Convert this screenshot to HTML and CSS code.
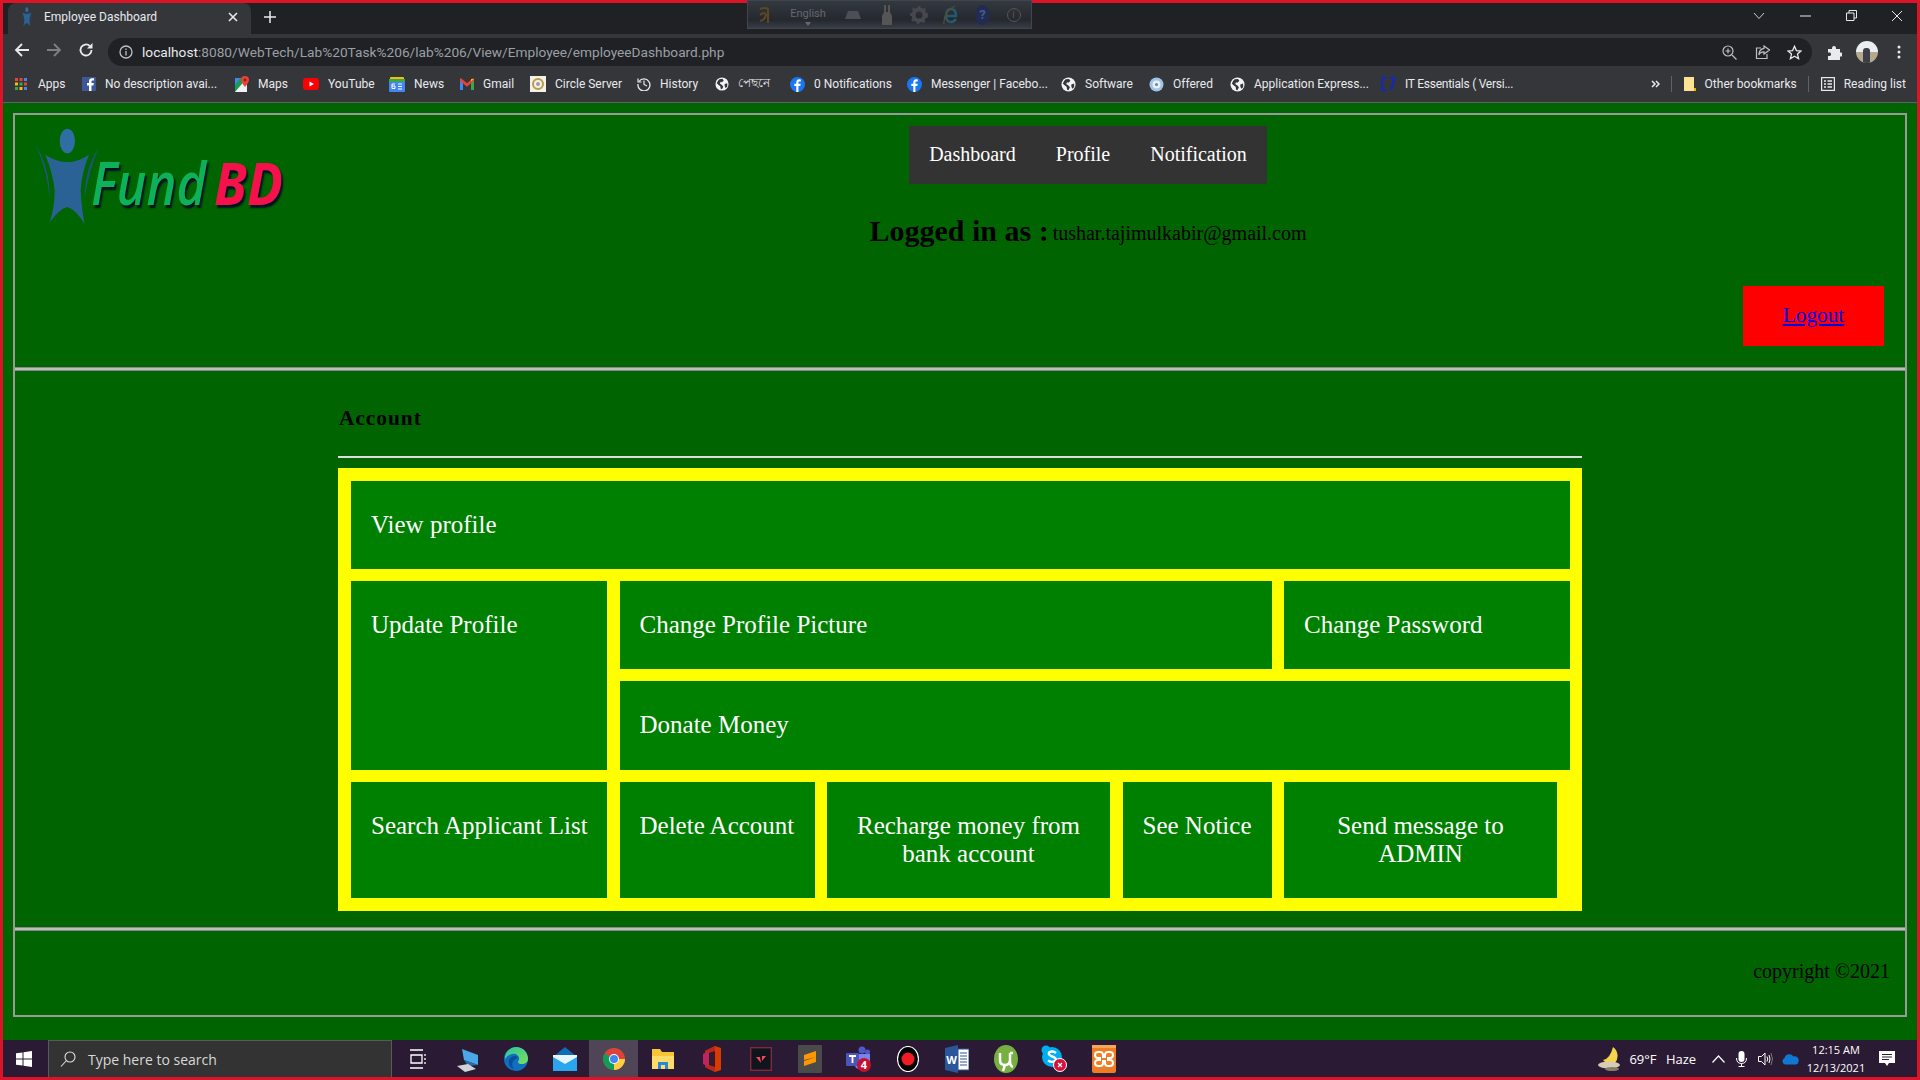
FILE: index.html
```html
<!DOCTYPE html>
<html lang="en">
<head>
<meta charset="utf-8">
<title>Employee Dashboard</title>
<link rel="stylesheet" href="styles.css">
</head>
<body>
<svg class="defs" xmlns="http://www.w3.org/2000/svg">
  <symbol id="figure" viewBox="100 50 210 300">
    <ellipse cx="203" cy="92" rx="23" ry="37" fill="#2f6ea3"/>
    <path d="M137 133 Q170 155 203 155 Q236 155 268 133 Q245 190 243 240 Q245 295 255 340 Q225 295 203 290 Q180 295 150 336 Q165 290 165 240 Q160 190 137 133Z" fill="#2a6296"/>
    <path d="M108 105 Q150 170 150 262 Q140 170 108 105Z" fill="#1f5585"/>
    <path d="M297 112 Q255 175 255 265 Q268 175 297 112Z" fill="#1f5585"/>
  </symbol>
  <symbol id="globe" viewBox="0 0 16 16">
    <circle cx="8" cy="8" r="7.5" fill="#f1f3f4"/>
    <path d="M5 2.5 L8.5 2 L10 4 L8 6 L6.5 5.5 L5.5 7.5 L8 9 L9.5 11 L8 14 L6.5 13.5 L6 10.5 L3.5 8.5 L2 7 Q3 4 5 2.5Z M11 8 L14 7 L14 11 L12 12.5 L11 10Z" fill="#35363a"/>
  </symbol>
  <symbol id="fbround" viewBox="0 0 16 16">
    <circle cx="8" cy="8" r="8" fill="#1877f2"/>
    <path d="M9 16V9.6h2l.4-2.3H9V5.9c0-.7.3-1.2 1.3-1.2h1.2V2.7c-.5-.1-1.2-.2-1.9-.2C8 2.500 6.700 3.700 6.700 5.600v1.700H4.600v2.300h2.100V16Z" fill="#fff"/>
  </symbol>
</svg>

<div class="window">
  <div class="langbar">
    <svg class="lb-i" width="14" height="20" viewBox="0 0 14 20"><path d="M2 4 Q8 2 10 4 L10 18 M2 10 Q7 6 8 10 Q7 15 2 16" fill="none" stroke="#5a4820" stroke-width="2"/></svg>
    <span class="lb-text">English<span class="lb-arrow"></span></span>
    <svg class="lb-i2" width="16" height="10" viewBox="0 0 16 10"><path d="M3 1H13L16 9H0Z" fill="#4c5056"/></svg>
    <svg class="lb-i3" width="12" height="22" viewBox="0 0 12 22"><path d="M3 1V8L1 12V21H11V12L9 8V1H7V8H5V1Z" fill="#555"/></svg>
    <svg class="lb-i4" width="18" height="18" viewBox="0 0 18 18"><circle cx="9" cy="9" r="5.500" fill="none" stroke="#45484e" stroke-width="4"/><circle cx="9" cy="9" r="8" fill="none" stroke="#45484e" stroke-width="2" stroke-dasharray="3 3"/></svg>
    <svg class="lb-i5" width="16" height="22" viewBox="0 0 16 22"><path d="M3 12H13Q13 5 8 5Q3 5 3 12Q3 18 8 18Q11 18 13 15" fill="none" stroke="#235a70" stroke-width="2.500"/><path d="M1 20Q0 8 12 2" fill="none" stroke="#5a4c20" stroke-width="1.300"/></svg>
    <span class="lb-q">?</span>
    <span class="lb-info">i</span>
  </div>

  <div class="tabstrip">
    <div class="tab">
      <svg class="tab-icon" width="14" height="20"><use href="#figure"/></svg>
      <span class="tab-title">Employee Dashboard</span>
      <svg class="tab-close" width="10" height="10" viewBox="0 0 10 10"><path d="M1 1L9 9M9 1L1 9" stroke="#e8eaed" stroke-width="1.600"/></svg>
    </div>
    <svg class="newtab" width="12" height="12" viewBox="0 0 12 12"><path d="M6 0V12M0 6H12" stroke="#e8eaed" stroke-width="1.500"/></svg>
    <div class="winctl">
      <svg width="12" height="8" viewBox="0 0 12 8"><path d="M1 1L6 6.500L11 1" fill="none" stroke="#c9cbce" stroke-width="1"/></svg>
      <svg width="11" height="2" viewBox="0 0 11 2"><path d="M0 1H11" stroke="#e8eaed" stroke-width="1"/></svg>
      <svg width="11" height="11" viewBox="0 0 11 11"><path d="M.5 3H8V10.500H.5ZM3 3V.5H10.500V8H8" fill="none" stroke="#e8eaed"/></svg>
      <svg width="12" height="12" viewBox="0 0 12 12"><path d="M1 1L11 11M11 1L1 11" stroke="#e8eaed" stroke-width="1"/></svg>
    </div>
  </div>

  <div class="toolbar">
    <svg class="nav-ic" width="16" height="16" viewBox="0 0 16 16"><path d="M15 8H2M8 2L2 8L8 14" fill="none" stroke="#e8eaed" stroke-width="1.800"/></svg>
    <svg class="nav-ic" width="16" height="16" viewBox="0 0 16 16"><path d="M1 8H14M8 2L14 8L8 14" fill="none" stroke="#7c7f84" stroke-width="1.800"/></svg>
    <svg class="nav-ic" width="16" height="16" viewBox="0 0 16 16"><path d="M13.500 8A5.500 5.500 0 1 1 11.800 4" fill="none" stroke="#e8eaed" stroke-width="1.800"/><path d="M14.500 1V6.500H9Z" fill="#e8eaed"/></svg>
    <div class="omnibox">
      <svg class="info" width="14" height="14" viewBox="0 0 14 14"><circle cx="7" cy="7" r="6" fill="none" stroke="#bdc1c6" stroke-width="1.300"/><path d="M7 6V10.500M7 3.500V5" stroke="#bdc1c6" stroke-width="1.300"/></svg>
      <span class="url"><span class="host">localhost</span>:8080/WebTech/Lab%20Task%206/lab%206/View/Employee/employeeDashboard.php</span>
      <div class="omni-right">
        <svg width="15" height="15" viewBox="0 0 15 15"><circle cx="6" cy="6" r="5" fill="none" stroke="#bdc1c6" stroke-width="1.200"/><path d="M10 10L14.500 14.500M6 3.500V8.500M3.500 6H8.500" stroke="#bdc1c6" stroke-width="1.200"/></svg>
        <svg width="15" height="15" viewBox="0 0 15 15"><path d="M6 3H1.500V13.500H12V9" fill="none" stroke="#bdc1c6" stroke-width="1.200"/><path d="M9 1L14.500 5L9 9V6.800Q5 6.800 3.800 10Q4 4.200 9 3.300Z" fill="none" stroke="#bdc1c6" stroke-width="1.200"/></svg>
        <svg width="15" height="15" viewBox="0 0 15 15"><path d="M7.500 1.300L9.400 5.600L14 6L10.500 9.100L11.600 13.700L7.500 11.300L3.400 13.700L4.500 9.100L1 6L5.600 5.600Z" fill="none" stroke="#e8eaed" stroke-width="1.300"/></svg>
      </div>
    </div>
    <div class="tool-right">
      <svg width="15" height="15" viewBox="0 0 15 15"><path d="M1 4H5V3A2 2 0 0 1 9 3V4H13V7.500H14A2 2 0 0 1 14 11.500H13V15H1V11H3A2 2 0 0 0 3 7.500H1Z" fill="#e8eaed"/></svg>
      <span class="avatar"><span class="avatar-man"></span></span>
      <svg width="4" height="14" viewBox="0 0 4 14"><circle cx="2" cy="2" r="1.500" fill="#e8eaed"/><circle cx="2" cy="7" r="1.500" fill="#e8eaed"/><circle cx="2" cy="12" r="1.500" fill="#e8eaed"/></svg>
    </div>
  </div>

  <div class="bookmarks">
    <div class="bm-list">
      <div class="bm"><svg width="12" height="12" viewBox="0 0 12 12"><g><rect width="3" height="3" fill="#ea4335"/><rect x="4.500" width="3" height="3" fill="#ea4335"/><rect x="9" width="3" height="3" fill="#4285f4"/><rect y="4.500" width="3" height="3" fill="#fbbc04"/><rect x="4.500" y="4.500" width="3" height="3" fill="#34a853"/><rect x="9" y="4.500" width="3" height="3" fill="#ea4335"/><rect y="9" width="3" height="3" fill="#34a853"/><rect x="4.500" y="9" width="3" height="3" fill="#fbbc04"/><rect x="9" y="9" width="3" height="3" fill="#4285f4"/></g></svg><span class="bm-apps">Apps</span></div>
      <div class="bm"><svg width="14" height="14" viewBox="0 0 14 14"><rect width="14" height="14" fill="#3b5998"/><path d="M9.500 14V8.500H11.500L11.800 6H9.500V4.700C9.500 4 9.800 3.500 10.700 3.500H12V1.300H10C8 1.300 7 2.500 7 4.300V6H5V8.500H7V14Z" fill="#fff"/></svg><span>No description avai...</span></div>
      <div class="bm"><svg width="14" height="16" viewBox="0 0 14 16"><rect y="2" width="12" height="14" fill="#1a9b5b"/><path d="M0 16L12 2V16Z" fill="#f2f2f2"/><path d="M0 2H5L0 9Z" fill="#4285f4"/><path d="M10 0A4 4 0 0 1 14 4Q14 6 10 11Q6 6 6 4A4 4 0 0 1 10 0Z" fill="#ea4335"/><circle cx="10" cy="4" r="1.400" fill="#8c1d18"/></svg><span>Maps</span></div>
      <div class="bm"><svg width="16" height="12" viewBox="0 0 16 12"><rect width="16" height="12" rx="3" fill="#f00"/><path d="M6.500 3.500V8.500L11 6Z" fill="#fff"/></svg><span>YouTube</span></div>
      <div class="bm"><svg width="16" height="16" viewBox="0 0 16 16"><rect x="1" y="1" width="14" height="5" rx="1" fill="#fbbc04"/><rect x="0" y="3" width="16" height="13" rx="1" fill="#4285f4"/><rect x="0" y="3" width="16" height="3" fill="#34a853"/><path d="M3 10H6V12.500H3V8H6M9 8H13M9 10.500H13M9 13H13" fill="none" stroke="#fff"/></svg><span>News</span></div>
      <div class="bm"><svg width="14" height="12" viewBox="0 0 14 12"><path d="M0 1V12H3V5Z" fill="#4285f4"/><path d="M14 1V12H11V5Z" fill="#34a853"/><path d="M0 1L7 7L14 1" fill="none" stroke="#ea4335" stroke-width="2.500"/><path d="M14 1L11 3.500V1Z" fill="#fbbc04"/></svg><span>Gmail</span></div>
      <div class="bm"><svg width="16" height="16" viewBox="0 0 16 16"><rect width="16" height="16" fill="#f4f1e8"/><circle cx="8" cy="8" r="5" fill="none" stroke="#b99b4a" stroke-width="2"/><circle cx="8" cy="8" r="2" fill="#9aa0a6"/></svg><span>Circle Server</span></div>
      <div class="bm"><svg width="14" height="14" viewBox="0 0 14 14"><path d="M2 4.500A6 6 0 1 1 1 7" fill="none" stroke="#e8eaed" stroke-width="1.300"/><path d="M7 3.500V7.500L10 9M1 1.500V5H4.500" fill="none" stroke="#e8eaed" stroke-width="1.200"/></svg><span>History</span></div>
      <div class="bm"><svg width="14" height="14"><use href="#globe"/></svg><span class="bn">পেছনে</span></div>
      <div class="bm"><svg width="15" height="15"><use href="#fbround"/></svg><span>0 Notifications</span></div>
      <div class="bm"><svg width="15" height="15"><use href="#fbround"/></svg><span>Messenger | Facebo...</span></div>
      <div class="bm"><svg width="15" height="15"><use href="#globe"/></svg><span>Software</span></div>
      <div class="bm"><svg width="15" height="15" viewBox="0 0 15 15"><circle cx="7.500" cy="7.500" r="7" fill="#9fc4e4"/><circle cx="7.500" cy="7.500" r="4" fill="#e8f0f6"/><circle cx="7.500" cy="7.500" r="1.500" fill="#5a87b0"/></svg><span>Offered</span></div>
      <div class="bm"><svg width="15" height="15"><use href="#globe"/></svg><span>Application Express...</span></div>
      <div class="bm"><svg width="15" height="16" viewBox="0 0 15 16"><path d="M6 2H1V14H6M9 2H14L10 14" fill="none" stroke="#1428b8" stroke-width="2.200"/></svg><span class="bm-it">IT Essentials ( Versi...</span></div>
    </div>
    <div class="bm-right">
      <svg class="chev" width="9" height="8" viewBox="0 0 9 8"><path d="M1 1L4 4L1 7M5 1L8 4L5 7" fill="none" stroke="#e8eaed" stroke-width="1.500"/></svg>
      <span class="sep"></span>
      <div class="bm"><svg width="12" height="14" viewBox="0 0 12 14"><path d="M0 0H10L10 11H12V14H0Z" fill="#fde293"/><path d="M10 11H12V14H10Z" fill="#e8b600"/></svg><span>Other bookmarks</span></div>
      <span class="sep"></span>
      <div class="bm"><svg width="14" height="14" viewBox="0 0 14 14"><rect x=".6" y=".6" width="12.800" height="12.800" fill="none" stroke="#e8eaed" stroke-width="1.200"/><path d="M3 4H5M3 7H5M3 10H5M6.500 4H11M6.500 7H11M6.500 10H11" stroke="#e8eaed" stroke-width="1.300"/></svg><span>Reading list</span></div>
    </div>
  </div>

  <div class="page">
    <div class="frame">
      <header class="site-head">
        <div class="logo">
          <svg class="logo-fig" width="70" height="100"><use href="#figure"/></svg>
          <div class="logo-word"><span class="fund">Fund</span><span class="bd">BD</span></div>
        </div>
        <div class="head-main">
          <nav class="topnav">
            <a class="topnav-link">Dashboard</a>
            <a class="topnav-link">Profile</a>
            <a class="topnav-link">Notification</a>
          </nav>
          <p class="logged"><b class="logged-label">Logged in as :</b> <span class="logged-mail">tushar.tajimulkabir@gmail.com</span></p>
          <div class="logout"><a class="logout-link" href="#">Logout</a></div>
        </div>
      </header>
      <div class="divider"></div>
      <main class="content">
        <div class="account">
          <h4 class="account-title">Account</h4>
          <hr class="account-rule">
          <div class="menu-grid">
            <div class="cell c-view">View profile</div>
            <div class="cell c-update">Update Profile</div>
            <div class="cell c-pic">Change Profile Picture</div>
            <div class="cell c-pass">Change Password</div>
            <div class="cell c-donate">Donate Money</div>
            <div class="cell c-search">Search Applicant List</div>
            <div class="cell c-delete">Delete Account</div>
            <div class="cell c-recharge center">Recharge money from bank account</div>
            <div class="cell c-notice">See Notice</div>
            <div class="cell c-send center">Send message to ADMIN</div>
          </div>
        </div>
      </main>
      <div class="divider"></div>
      <footer class="site-foot">copyright ©2021</footer>
    </div>
  </div>

  <div class="taskbar">
    <div class="start"><svg width="16" height="16" viewBox="0 0 16 16"><path d="M0 2.300L6.500 1.400V7.500H0ZM7.500 1.300L16 0V7.500H7.500ZM0 8.500H6.500V14.600L0 13.700ZM7.500 8.500H16V16L7.500 14.700Z" fill="#fff"/></svg></div>
    <div class="search">
      <svg width="16" height="16" viewBox="0 0 16 16"><circle cx="10" cy="6" r="5" fill="none" stroke="#e0e0e0" stroke-width="1.100"/><path d="M6.500 9.500L1 15.500" stroke="#e0e0e0" stroke-width="1.100"/></svg>
      <span class="search-text">Type here to search</span>
    </div>
    <div class="task-icons">
      <div class="ti"><svg width="16" height="20" viewBox="0 0 16 20"><path d="M0 1H13M0 19H13M1 6H12V14H1Z M15 5V7M15 9V11M15 13V15" fill="none" stroke="#fff" stroke-width="1.300"/></svg></div>
      <div class="ti"><svg width="24" height="26" viewBox="0 0 24 26"><path d="M7 3L23 9V19L9 14Z" fill="#4aa8e8"/><path d="M9 14L23 19L13 20Z" fill="#2b6ea8"/><path d="M2 20L13 18L21 23L10 26Z" fill="#cfd4d8"/></svg></div>
      <div class="ti"><svg width="24" height="24" viewBox="0 0 24 24"><defs><linearGradient id="edgeg" x1="0" y1="0" x2="1" y2="1"><stop offset="0" stop-color="#2cc3a0"/><stop offset="1" stop-color="#7be05a"/></linearGradient></defs><circle cx="12" cy="12" r="12" fill="#0f70c0"/><path d="M1 9C3 2 9 0 12 0C19 0 24 5 24 12C24 15 21 17 18 17C14 17 13 15 15 13C16 9 12 6 8 7C5 8 3 9 1 12Z" fill="url(#edgeg)"/><path d="M12 12C8 13 7 18 10 22C6 21 4 17 5 13C7 9 11 8 14 10Z" fill="#0b4e9b"/></svg></div>
      <div class="ti"><svg width="24" height="24" viewBox="0 0 24 24"><path d="M0 10L12 0L24 10V24H0Z" fill="#0f6cbd"/><path d="M0 10H24V24H0Z" fill="#2aa5ee"/><path d="M0 10L12 17L24 10V8H0Z" fill="#e8f4fc"/></svg></div>
      <div class="ti active"><svg width="22" height="22" viewBox="0 0 22 22"><circle cx="11" cy="11" r="11" fill="#db4437"/><path d="M11 11L1.500 5.500A11 11 0 0 0 11 22Z" fill="#0f9d58"/><path d="M11 11H22A11 11 0 0 1 11 22Z" fill="#ffcd40"/><circle cx="11" cy="11" r="5" fill="#fff"/><circle cx="11" cy="11" r="4" fill="#4285f4"/></svg></div>
      <div class="ti"><svg width="22" height="22" viewBox="0 0 22 22"><path d="M0 1H8L10 4H22V21H0Z" fill="#f8c537"/><path d="M0 8H22V21H0Z" fill="#fcdc6a"/><path d="M6 21V14H16V21H13V17H9V21Z" fill="#2b88d8"/></svg></div>
      <div class="ti"><svg width="18" height="26" viewBox="0 0 18 26"><path d="M2 5L12 0L18 2V24L12 26L2 21Z" fill="#d83b01"/><path d="M2 5L12 0V26L2 21Z" fill="#b7281a"/><path d="M6 7L12 5V21L6 19Z" fill="#35192f"/><path d="M0 8L6 5V21L0 18Z" fill="#c0245e"/></svg></div>
      <div class="ti"><svg width="22" height="24" viewBox="0 0 22 24"><rect x=".7" y=".7" width="20.600" height="22.600" fill="#10141c" stroke="#7d2a3c" stroke-width="1.400"/><path d="M6 10L11 16L10 10ZM16 9L12 14L12 9Z" fill="#ff4655"/></svg></div>
      <div class="ti"><svg width="24" height="28" viewBox="0 0 24 28"><rect width="24" height="28" rx="1" fill="#4a4a4a"/><path d="M18 6L6 10V15L18 12ZM18 12V17L6 21V16" fill="#ff9800"/></svg></div>
      <div class="ti"><svg width="27" height="27" viewBox="0 0 27 27"><circle cx="17" cy="5" r="3.500" fill="#5059c9"/><circle cx="22.500" cy="7" r="2.500" fill="#5059c9"/><path d="M10 9H25V20Q25 24 20 24H15Q10 24 10 20Z" fill="#7b83eb"/><rect x="1" y="8" width="13" height="13" rx="1" fill="#4b53bc"/><path d="M4 11H11M7.500 11V18" stroke="#fff" stroke-width="1.800"/><circle cx="19" cy="20" r="7" fill="#c4102e"/><text class="badge-num" x="19" y="24">4</text></svg></div>
      <div class="ti"><svg width="22" height="26" viewBox="0 0 22 26"><ellipse cx="11" cy="13" rx="10.500" ry="12.500" fill="#000" stroke="#fff" stroke-width="1.200"/><circle cx="11" cy="13" r="6.500" fill="#ee1c25"/></svg></div>
      <div class="ti"><svg width="24" height="28" viewBox="0 0 24 28"><path d="M0 3L13 0V28L0 25Z" fill="#2b579a"/><path d="M13 4H24V25H13Z" fill="#fff" stroke="#2b579a"/><path d="M15 8H22M15 11H22M15 14H22M15 17H22M15 20H22" stroke="#2b579a"/><text class="word-w" x="6.500" y="19">W</text></svg></div>
      <div class="ti"><svg width="24" height="28" viewBox="0 0 24 28"><ellipse cx="12" cy="14" rx="12" ry="14" fill="#76b041"/><path d="M6 8V15Q6 20 11 20Q15 20 16 16V8M16 8H19M16 16Q16 21 19 22M11 20L9 26" fill="none" stroke="#fff" stroke-width="2.500"/></svg></div>
      <div class="ti"><svg width="27" height="27" viewBox="0 0 27 27"><circle cx="11" cy="12" r="10" fill="#00aff0"/><circle cx="5" cy="5" r="4.500" fill="#00aff0"/><path d="M15 8Q12 5.500 8.500 7Q6.500 9 10 11Q15 12.500 15 15Q12 18.500 7 15.500" fill="none" stroke="#fff" stroke-width="2.400"/><circle cx="19" cy="20" r="6.500" fill="#d6113c" stroke="#fff"/><path d="M17 18L21 22M21 18L17 22" stroke="#fff" stroke-width="1.300"/></svg></div>
      <div class="ti"><svg width="24" height="28" viewBox="0 0 24 28"><rect width="24" height="28" rx="2" fill="#f07c24"/><rect x="0" y="0" width="24" height="3" fill="#f9a45b"/><path d="M8 7H6A3 3 0 0 0 6 13H8V15H6A3 3 0 0 0 6 21H8A3 3 0 0 0 11 18V16H13V18A3 3 0 0 0 16 21H18A3 3 0 0 0 18 15H16V13H18A3 3 0 0 0 18 7H16A3 3 0 0 0 13 10V12H11V10A3 3 0 0 0 8 7Z" fill="none" stroke="#fff" stroke-width="2"/></svg></div>
    </div>
    <div class="tray">
      <div class="tr"><svg width="25" height="26" viewBox="0 0 25 26"><path d="M16 1A11 11 0 0 1 18 17Q10 19 6 14Q13 13 16 1Z" fill="#f6d44c"/><ellipse cx="12" cy="19" rx="11" ry="3.500" fill="#d6cdb4"/><ellipse cx="15" cy="23" rx="7" ry="2" fill="#857c6c"/></svg></div>
      <div class="tr tr-text">69°F</div>
      <div class="tr tr-text">Haze</div>
      <div class="tr"><svg width="13" height="8" viewBox="0 0 13 8"><path d="M.5 7.500L6.500 1L12.500 7.500" fill="none" stroke="#fff" stroke-width="1.200"/></svg></div>
      <div class="tr"><svg width="11" height="16" viewBox="0 0 11 16"><rect x="2.500" y="0" width="6" height="11" rx="3" fill="#fff"/><path d="M.5 7Q.5 12.500 5.500 12.500Q10.500 12.500 10.500 7M5.500 12.500V15.500M2.500 15.500H8.500" fill="none" stroke="#fff"/></svg></div>
      <div class="tr"><svg width="16" height="14" viewBox="0 0 16 14"><path d="M.5 4.500H3.500L7 1V13L3.500 9.500H.5Z" fill="none" stroke="#fff"/><path d="M9 4.500Q10.500 7 9 9.500M11 3Q13 7 11 11" fill="none" stroke="#fff"/><path d="M13 1Q16 7 13 13" fill="none" stroke="#777" /></svg></div>
      <div class="tr"><svg width="18" height="12" viewBox="0 0 18 12"><path d="M4 11.500A3.500 3.500 0 0 1 3.500 5A5 5 0 0 1 12.500 3.500A4 4 0 0 1 17.500 8.500A3 3 0 0 1 15 11.500Z" fill="#0f78d4"/></svg></div>
      <div class="clock"><span>12:15 AM</span><span>12/13/2021</span></div>
      <div class="tr"><svg width="16" height="16" viewBox="0 0 16 16"><path d="M0 0H16V12H10L8 15L6 12H0Z" fill="#fff"/><path d="M3 3.500H13M3 6H13M3 8.500H10" stroke="#2b1a33"/></svg></div>
    </div>
  </div>
</div>
</body>
</html>
```

FILE: styles.css
```css
* { box-sizing: border-box; }
html, body { margin: 0; height: 100%; overflow: hidden; }
body { background: #006400; }
.defs { display: none; }

.window {
  position: relative;
  width: 1920px;
  height: 1080px;
  border: 3px solid #dc1428;
  display: flex;
  flex-direction: column;
  font-family: Roboto, "Noto Sans", sans-serif;
  color: #e8eaed;
  background: #202124;
}

/* ghost language bar */
.langbar {
  position: absolute;
  left: 744px;
  top: -3px;
  width: 285px;
  height: 29px;
  background: linear-gradient(#34383f, #25282f 70%, #383c45);
  border: 1px solid #41454f;
  z-index: 3;
  display: grid;
  grid-template-columns: 34px 52px 37px 31px 33px 32px 31px 31px;
  align-items: center;
  justify-items: center;
}
.lb-text { font-size: 11px; color: #66696f; margin-top: -3px; position: relative; }
.lb-arrow { position: absolute; left: 50%; top: 15px; margin-left: -3px; border: 3px solid transparent; border-top: 4px solid #66696f; border-bottom: 0; }
.lb-q { width: 15px; height: 20px; border-radius: 50%; background: #222c52; color: #4a5a8a; font-size: 13px; font-weight: 700; text-align: center; line-height: 20px; }
.lb-info { width: 14px; height: 14px; border-radius: 50%; border: 1px solid #555; color: #555; font-size: 10px; text-align: center; line-height: 12px; }

/* tabs */
.tabstrip { height: 31px; display: flex; align-items: center; background: #202124; flex: none; }
.tab {
  width: 243px;
  height: 31px;
  margin-left: 5px;
  background: #35363a;
  border-radius: 8px 8px 0 0;
  display: flex;
  align-items: center;
  padding: 0 13px 4px 12px;
}
.tab-icon { flex: none; }
.tab-title { font-size: 12px; margin-left: 10px; flex: 1; }
.newtab { margin: 0 0 4px 13px; }
.winctl {
  margin-left: auto;
  display: grid;
  grid-template-columns: 46px 46px 46px 46px;
  justify-items: center;
  align-items: center;
  margin-right: -3px;
  margin-top: -6px;
}

/* toolbar */
.toolbar { height: 32px; display: flex; align-items: center; background: #35363a; flex: none; padding-left: 11px; gap: 16px; }
.nav-ic { flex: none; }
.omnibox {
  flex: none;
  width: 1704px;
  height: 28px;
  margin: 4px 0 0 -2px;
  background: #202124;
  border-radius: 14px;
  display: flex;
  align-items: center;
  padding-left: 11px;
}
.url { font-size: 13.7px; color: #9aa0a6; margin-left: 9px; }
.host { color: #e8eaed; }
.omni-right { margin-left: auto; display: grid; grid-template-columns: 33px 32px 32px; justify-items: center; padding-right: 2px; }
.tool-right { flex: none; display: grid; grid-template-columns: 31px 33px 31px; justify-items: center; align-items: center; margin: 4px 0 0 -9px; }
.avatar { width: 22px; height: 22px; border-radius: 50%; background: linear-gradient(#e9eef0 50%, #b5a88c 50%); display: flex; justify-content: center; align-items: flex-end; overflow: hidden; }
.avatar-man { width: 7px; height: 15px; background: #3a3f4a; border-radius: 3px 3px 0 0; }

/* bookmarks */
.bookmarks {
  height: 37px;
  background: #35363a;
  border-bottom: 1px solid #5f6368;
  display: flex;
  align-items: center;
  flex: none;
  padding-left: 12px;
}
.bm-list { display: grid; grid-template-columns: 67px 153px 68px 86px 71px 70px 107px 78px 75px 117px 154px 88px 81px 151px 131px; }
.bm { display: flex; align-items: center; gap: 9px; font-size: 12px; white-space: nowrap; }
.bm svg { flex: none; }
.bm-apps { margin-left: 2px; }
.bm-it { letter-spacing: -.25px; }
.bn { font-family: "Noto Sans", "DejaVu Sans", sans-serif; }
.bm-right { margin-left: auto; display: flex; align-items: center; }
.chev { margin-right: 11px; }
.sep { width: 1px; height: 16px; background: #5f6368; margin-right: 12px; }
.bm-right .sep + .bm { margin-right: 11px; }

/* page */
.page { flex: 1; background: #006400; padding: 10px 10px 23px 10px; min-height: 0; font-family: "Liberation Serif", "Times New Roman", serif; color: #000; }
.frame { height: 904px; border: 2px solid #999; display: flex; flex-direction: column; }
.site-head { height: 252px; display: grid; grid-template-columns: 256px 1fr; flex: none; }
.logo { position: relative; padding: 12px 0 0 18px; }
.logo-fig { display: block; }
.logo-word { position: absolute; left: 76px; top: 32px; font-family: "Open Sans", sans-serif; font-style: italic; font-size: 59px; line-height: 70px; white-space: nowrap; text-shadow: 2px 3px 2px #012; }
.fund { position: absolute; left: 0; top: 0; color: #0eb05a; font-weight: 600; transform: scaleX(.86); transform-origin: left; }
.bd { position: absolute; left: 123px; top: 0; color: #f5114a; font-weight: 700; transform: scaleX(.9); transform-origin: left; }

.head-main { display: flex; flex-direction: column; align-items: center; }
.topnav { display: flex; background: #333; margin-top: 11px; height: 58px; padding-bottom: 2px; align-items: center; }
.topnav-link { color: #fff; font-size: 20px; padding: 0 20px; }
.logged { margin: 29px 0 0; height: 36px; line-height: 36px; }
.logged-label { font-size: 30px; }
.logged-mail { font-size: 20px; position: relative; top: -1px; }
.logout { align-self: flex-end; margin: 37px 21px 0 0; width: 141px; height: 60px; padding-bottom: 2px; background: #f00; display: flex; align-items: center; justify-content: center; }
.logout-link { color: #00e; font-size: 21.33px; text-decoration: underline; }

.divider { height: 4px; flex: none; background: #bdbdbd; border-top: 1px solid #888; border-bottom: 1px solid #888; }

.content { flex: none; height: 556px; }
.account { width: 1244px; margin: 0 auto; }
.account-title { margin: 0; padding: 36px 0 0 1px; font-size: 21.33px; line-height: 23px; letter-spacing: 1px; font-weight: 700; }
.account-rule { margin: 26px 0 10px; border: 0; height: 2px; background: #ddd; }
.menu-grid {
  background: #ff0;
  padding: 13px;
  display: grid;
  grid-template-columns: 256px 195px 283px 149px 273px 0;
  grid-template-rows: 88px 88px 89px 116px;
  gap: 12px 12.5px;
}
.cell { background: #008000; color: #fff; font-size: 25px; line-height: 28px; padding: 30px 20px; }
.center { text-align: center; }
.c-view { grid-column: 1 / 7; }
.c-update { grid-row: 2 / 4; }
.c-pic { grid-column: 2 / 5; }
.c-pass { grid-column: 5 / 7; }
.c-donate { grid-column: 2 / 7; }
.c-search { padding-right: 0; white-space: nowrap; }

.site-foot { flex: 1; text-align: right; padding: 28px 15px 0 0; font-size: 20px; line-height: 24px; }

/* taskbar */
.taskbar { height: 37px; background: #2b1a33; display: flex; align-items: stretch; flex: none; font-family: "Open Sans", "Noto Sans", sans-serif; color: #fff; }
.start { width: 45px; padding-right: 3px; display: flex; align-items: center; justify-content: center; }
.search { width: 344px; background: #333; border: 1px solid #5a5a5a; border-bottom: 0; display: flex; align-items: center; padding-left: 11px; }
.search-text { margin-left: 12px; font-size: 14px; color: #d8d8d8; }
.task-icons { display: flex; margin-left: 1px; }
.ti { width: 49px; display: flex; align-items: center; justify-content: center; }
.ti.active { background: #4f4556; }
.badge-num { font: 700 11px "Open Sans", sans-serif; fill: #fff; text-anchor: middle; }
.word-w { font: 700 11px "Open Sans", sans-serif; fill: #fff; text-anchor: middle; }
.tray { margin-left: auto; display: grid; grid-template-columns: 38px 30px 46px 28px 19px 30px 18px 74px 28px 16px; align-items: center; justify-items: center; }
.tr { display: flex; align-items: center; justify-content: center; }
.tr-text { font-size: 13px; white-space: nowrap; }
.clock { display: flex; flex-direction: column; align-items: center; font-size: 11px; line-height: 18px; white-space: nowrap; }
```
